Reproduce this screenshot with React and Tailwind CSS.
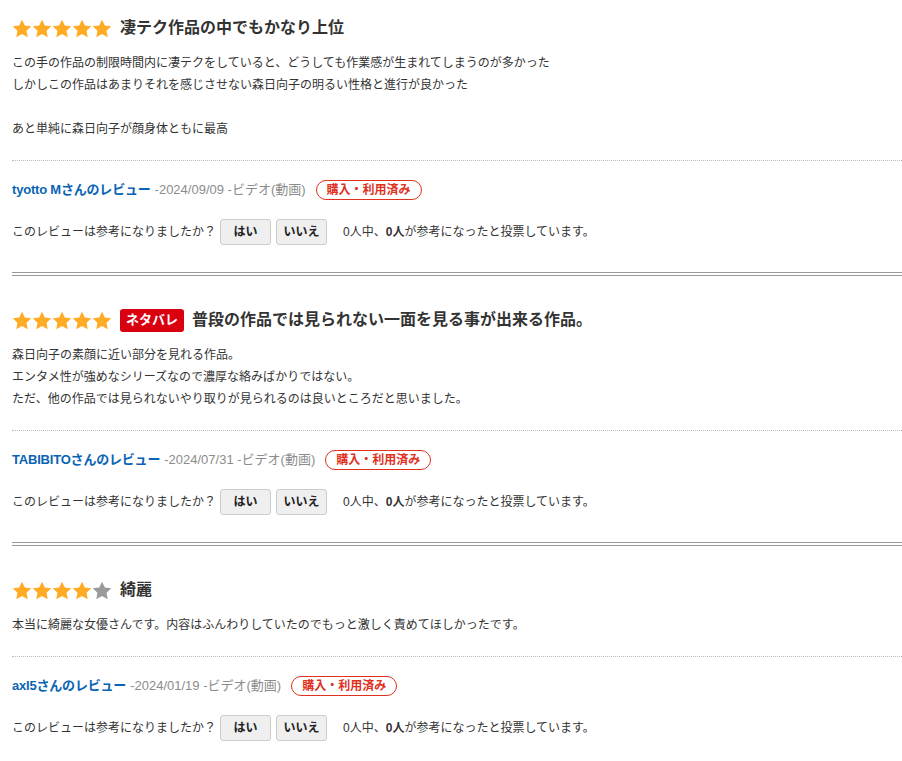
import React from 'react';

const reviews = [
  {
    rating: 5,
    spoiler: false,
    title: '凄テク作品の中でもかなり上位',
    body: [
      'この手の作品の制限時間内に凄テクをしていると、どうしても作業感が生まれてしまうのが多かった',
      'しかしこの作品はあまりそれを感じさせない森日向子の明るい性格と進行が良かった',
      '',
      'あと単純に森日向子が顔身体ともに最高',
    ],
    name: 'tyotto M',
    date: '2024/09/09',
  },
  {
    rating: 5,
    spoiler: true,
    title: '普段の作品では見られない一面を見る事が出来る作品。',
    body: [
      '森日向子の素顔に近い部分を見れる作品。',
      'エンタメ性が強めなシリーズなので濃厚な絡みばかりではない。',
      'ただ、他の作品では見られないやり取りが見られるのは良いところだと思いました。',
    ],
    name: 'TABIBITO',
    date: '2024/07/31',
  },
  {
    rating: 4,
    spoiler: false,
    title: '綺麗',
    body: ['本当に綺麗な女優さんです。内容はふんわりしていたのでもっと激しく責めてほしかったです。'],
    name: 'axl5',
    date: '2024/01/19',
  },
];

const Star = ({ on }) => (
  <svg width="20" height="19" viewBox="0 0 24 23" className="shrink-0">
    <path
      d="M12 0.8l3.4 7.1 7.8 1-5.7 5.4 1.4 7.7L12 18.3 5.1 22l1.4-7.7L0.8 8.9l7.8-1z"
      fill={on ? '#ffab25' : '#9a9a9a'}
    />
  </svg>
);

const Review = ({ r, first, last }) => (
  <div className={first ? 'pt-4' : 'pt-[32px]'}>
    {/* ===== TITLE ===== */}
    <div className="flex items-center h-6">
      <div className="flex">
        {[1, 2, 3, 4, 5].map((i) => (
          <Star key={i} on={i <= r.rating} />
        ))}
      </div>
      {r.spoiler && (
        <span className="ml-2 h-[23px] px-[6px] flex items-center bg-[#d9000f] text-white text-[13px] font-bold rounded-[3px]">
          ネタバレ
        </span>
      )}
      <h3 className="ml-2 text-base font-bold text-[#333]">{r.title}</h3>
    </div>

    {/* ===== BODY ===== */}
    <div className="mt-3 pb-5 text-xs leading-[22px] text-[#333]">
      {r.body.map((line, i) => (
        <p key={i} className="h-[22px]">
          {line}
        </p>
      ))}
    </div>

    <div className="border-t border-dotted border-[#bbb]" />

    {/* ===== REVIEWER ===== */}
    <div className="mt-[19px] h-5 flex items-center text-[13px]">
      <span className="font-bold text-[#0a64b4] tracking-[-0.2px]">{r.name}さんのレビュー</span>
      <span className="ml-1 text-[#8c8c8c]">-{r.date} -ビデオ(動画)</span>
      <span className="ml-[10px] h-5 px-[10px] flex items-center border border-[#e0301e] rounded-full text-[#e0301e] text-xs font-bold">
        購入・利用済み
      </span>
    </div>

    {/* ===== HELPFUL ===== */}
    <div className="mt-[19px] h-[26px] flex items-center text-xs text-[#333]">
      <span>このレビューは参考になりましたか？</span>
      <button className="ml-1 w-[51px] h-[26px] bg-[#efefef] border border-[#ccc] rounded-[3px] font-bold text-[#222]">
        はい
      </button>
      <button className="ml-[5px] w-[51px] h-[26px] bg-[#efefef] border border-[#ccc] rounded-[3px] font-bold text-[#222]">
        いいえ
      </button>
      <span className="ml-4">
        0人中、<b>0人</b>が参考になったと投票しています。
      </span>
    </div>

    <div className={last ? 'h-[20px]' : 'mt-[27px] border-t-4 border-double border-[#999]'} />
  </div>
);

export default function App() {
  return (
    <div
      className="w-[902px] pl-3 bg-white"
      style={{ fontFamily: '"Liberation Sans", "Noto Sans CJK JP", sans-serif' }}
    >
      {reviews.map((r, i) => (
        <Review key={i} r={r} first={i === 0} last={i === reviews.length - 1} />
      ))}
    </div>
  );
}
